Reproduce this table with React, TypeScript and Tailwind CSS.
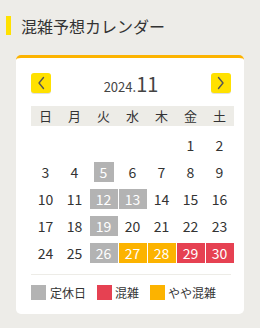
import React from 'react';

type DayKind = 'closed' | 'busy' | 'crowded' | undefined;

const WEEKDAYS = ['日', '月', '火', '水', '木', '金', '土'];

// November 2024 starts on a Friday
const LEAD = 5;
const DAYS_IN_MONTH = 30;

const STATUS: Record<number, DayKind> = {
  5: 'closed',
  12: 'closed',
  13: 'closed',
  19: 'closed',
  26: 'closed',
  27: 'crowded',
  28: 'crowded',
  29: 'busy',
  30: 'busy',
};

const kindClass: Record<string, string> = {
  closed: 'bg-[#b3b3b3] text-white',
  busy: 'bg-[#e64152] text-white',
  crowded: 'bg-[#fcb300] text-white',
};

function Chevron({ dir }: { dir: 'left' | 'right' }) {
  return (
    <svg width="10" height="16" viewBox="0 0 10 16" fill="none">
      <path
        d={dir === 'left' ? 'M7.5 2.5 L3 8 L7.5 13.5' : 'M2.5 2.5 L7 8 L2.5 13.5'}
        stroke="#555"
        strokeWidth="1.4"
        strokeLinecap="round"
        strokeLinejoin="round"
      />
    </svg>
  );
}

export default function App() {
  const cells: (number | null)[] = [];
  for (let i = 0; i < LEAD; i++) cells.push(null);
  for (let d = 1; d <= DAYS_IN_MONTH; d++) cells.push(d);

  return (
    <div
      className="w-[260px] h-[328px] bg-[#edece8] text-[#333] overflow-hidden"
      style={{ fontFamily: '"Noto Sans CJK JP", "Noto Sans", sans-serif' }}
    >
      <div className="flex items-center pt-[15px] pl-[6px] h-[36px]">
        <span className="w-[5px] h-[19px] bg-[#ffe100]" />
        <h1 className="ml-[10px] text-[16px] leading-[20px] font-normal">混雑予想カレンダー</h1>
      </div>

      <div className="mx-[16px] mt-[19px] bg-white border-t-[3px] border-[#fcb300] rounded-[5px] px-[15px] pt-[15px] pb-[14px]">
        <div className="flex items-center justify-between w-[200px] h-[20px]">
          <button className="w-[20px] h-[20px] rounded-[3px] bg-[#ffe100] shadow-[0_1px_0_rgba(0,0,0,0.12)] flex items-center justify-center">
            <Chevron dir="left" />
          </button>
          <div className="flex items-baseline h-[20px] leading-[20px] mt-[2px]">
            <span className="text-[13px] text-[#444]">2024.</span>
            <span className="text-[20px] text-[#444]">11</span>
          </div>
          <button className="w-[20px] h-[20px] rounded-[3px] bg-[#ffe100] shadow-[0_1px_0_rgba(0,0,0,0.12)] flex items-center justify-center">
            <Chevron dir="right" />
          </button>
        </div>

        <div className="mt-[13px] w-[203px] h-[20px] bg-[#edece7] grid grid-cols-7 items-center text-[13px] leading-[20px]">
          {WEEKDAYS.map((w) => (
            <span key={w} className="text-center">{w}</span>
          ))}
        </div>

        <div className="mt-[9px] w-[203px] grid grid-cols-7 gap-y-[7px] text-[14px]">
          {cells.map((d, i) => {
            if (d === null) return <span key={`e${i}`} className="h-[20px]" />;
            const kind = STATUS[d];
            return (
              <div key={d} className="h-[20px] flex items-center justify-center">
                <span
                  className={`h-[20px] leading-[20px] ${
                    kind ? `${kindClass[kind]} ${d < 10 ? 'w-[20px]' : 'w-[28px]'}` : ''
                  } text-center`}
                >
                  {d}
                </span>
              </div>
            );
          })}
        </div>

        <div className="mt-[11px] w-[200px] h-px bg-[#edece7]" />

        <div className="mt-[10px] flex items-center text-[12px] leading-[15px]">
          <span className="w-[15px] h-[15px] bg-[#b3b3b3]" />
          <span className="ml-[4px]">定休日</span>
          <span className="ml-[11px] w-[15px] h-[15px] bg-[#e64152]" />
          <span className="ml-[3px]">混雑</span>
          <span className="ml-[11px] w-[15px] h-[15px] bg-[#fcb300]" />
          <span className="ml-[3px]">やや混雑</span>
        </div>
      </div>
    </div>
  );
}
